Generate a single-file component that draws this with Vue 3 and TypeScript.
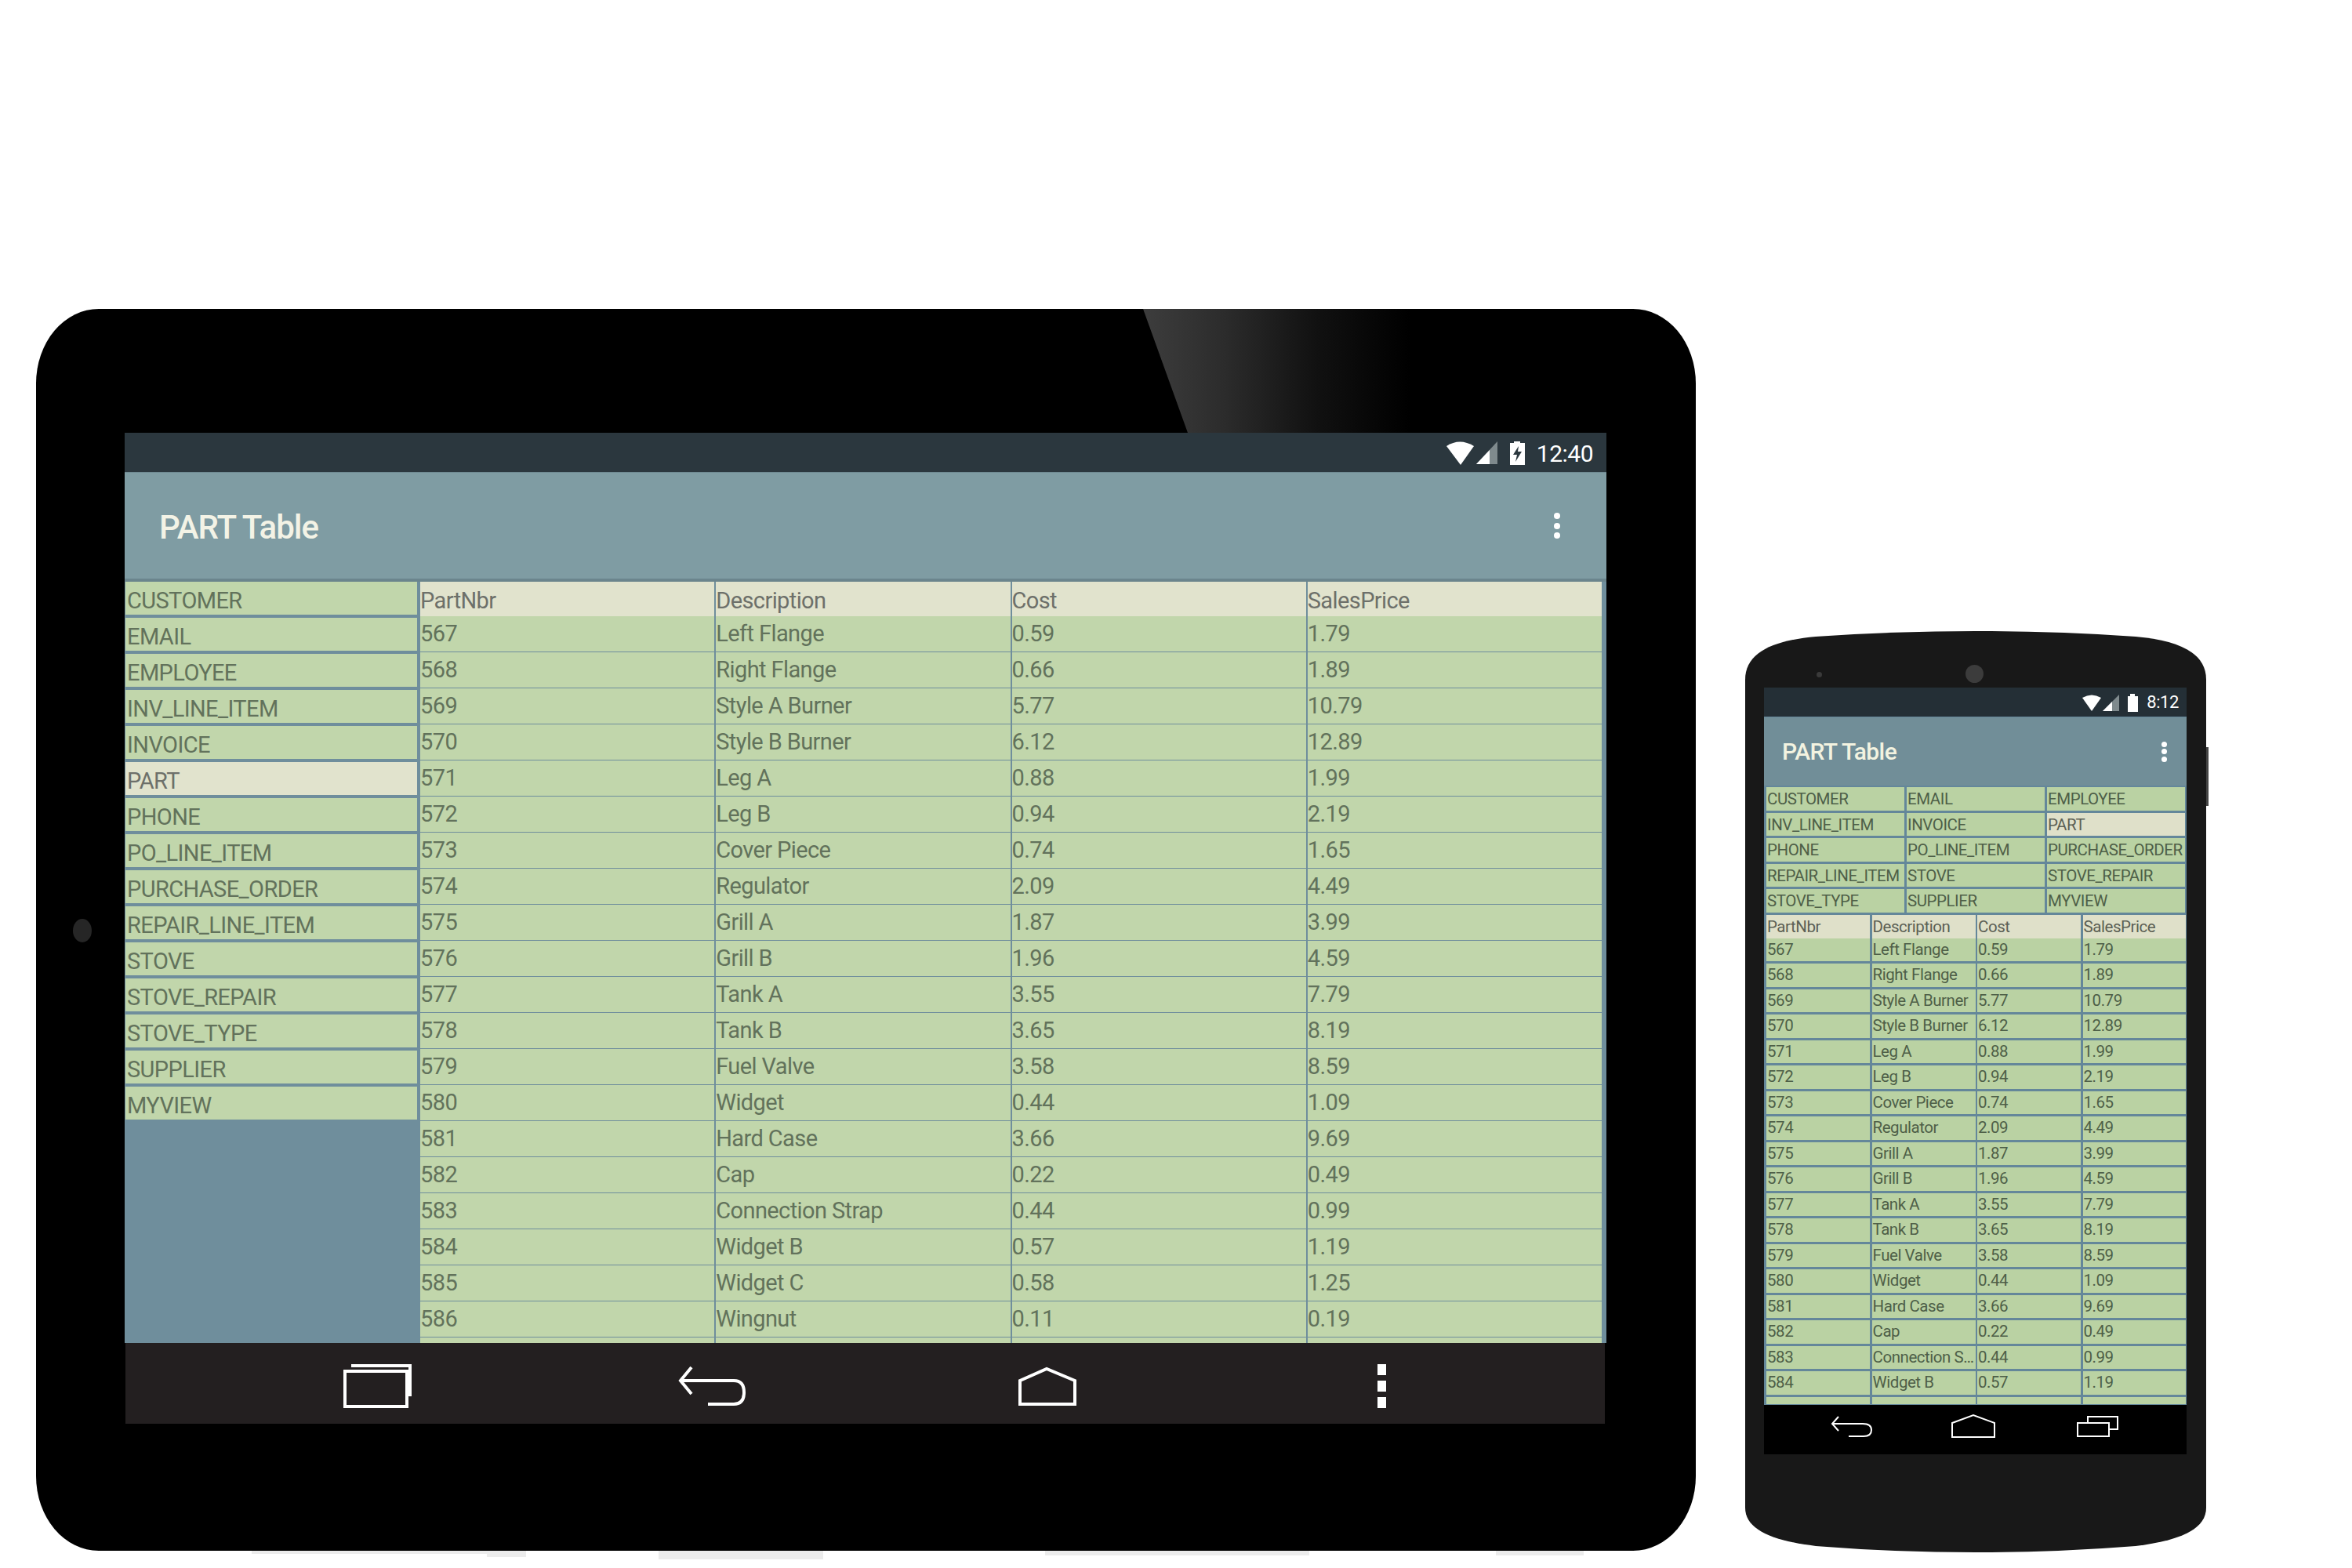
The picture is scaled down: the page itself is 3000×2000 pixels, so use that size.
<script setup lang="ts">
interface Part {
  nbr: number
  desc: string
  cost: string
  price: string
}

const tables: string[] = [
  'CUSTOMER', 'EMAIL', 'EMPLOYEE', 'INV_LINE_ITEM', 'INVOICE', 'PART', 'PHONE', 'PO_LINE_ITEM',
  'PURCHASE_ORDER', 'REPAIR_LINE_ITEM', 'STOVE', 'STOVE_REPAIR', 'STOVE_TYPE', 'SUPPLIER', 'MYVIEW',
]
const columns: string[] = ['PartNbr', 'Description', 'Cost', 'SalesPrice']

const parts: Part[] = [
  { nbr: 567, desc: 'Left Flange', cost: '0.59', price: '1.79' },
  { nbr: 568, desc: 'Right Flange', cost: '0.66', price: '1.89' },
  { nbr: 569, desc: 'Style A Burner', cost: '5.77', price: '10.79' },
  { nbr: 570, desc: 'Style B Burner', cost: '6.12', price: '12.89' },
  { nbr: 571, desc: 'Leg A', cost: '0.88', price: '1.99' },
  { nbr: 572, desc: 'Leg B', cost: '0.94', price: '2.19' },
  { nbr: 573, desc: 'Cover Piece', cost: '0.74', price: '1.65' },
  { nbr: 574, desc: 'Regulator', cost: '2.09', price: '4.49' },
  { nbr: 575, desc: 'Grill A', cost: '1.87', price: '3.99' },
  { nbr: 576, desc: 'Grill B', cost: '1.96', price: '4.59' },
  { nbr: 577, desc: 'Tank A', cost: '3.55', price: '7.79' },
  { nbr: 578, desc: 'Tank B', cost: '3.65', price: '8.19' },
  { nbr: 579, desc: 'Fuel Valve', cost: '3.58', price: '8.59' },
  { nbr: 580, desc: 'Widget', cost: '0.44', price: '1.09' },
  { nbr: 581, desc: 'Hard Case', cost: '3.66', price: '9.69' },
  { nbr: 582, desc: 'Cap', cost: '0.22', price: '0.49' },
  { nbr: 583, desc: 'Connection Strap', cost: '0.44', price: '0.99' },
  { nbr: 584, desc: 'Widget B', cost: '0.57', price: '1.19' },
  { nbr: 585, desc: 'Widget C', cost: '0.58', price: '1.25' },
  { nbr: 586, desc: 'Wingnut', cost: '0.11', price: '0.19' },
]
// phone screen only fits up to 584, the next row is cut off before its text
const phoneParts = parts.slice(0, 18)
const selected = 'PART'

// grey smears under the tablet edge
const smears = [
  { left: 275, width: 330, height: 4 },
  { left: 575, width: 50, height: 8 },
  { left: 794, width: 210, height: 11 },
  { left: 1287, width: 337, height: 6 },
  { left: 1862, width: 112, height: 6 },
]
</script>

<template>
  <div class="stage">
    <!-- tablet -->
    <div class="tablet">
      <div class="glare"></div>
      <div class="tablet-cam"></div>
      <div v-for="s in smears" :key="s.left" class="smear" :style="{ left: s.left + 'px', width: s.width + 'px', height: s.height + 'px' }"></div>
      <div class="t-screen">
        <div class="t-status">
          <svg class="t-status-icons" width="100" height="32" viewBox="0 0 100 32">
            <path d="M0 7 Q17 -4 35 7 L18 31 Z" fill="#fff" />
            <path d="M38 30 L65 1 V30 Z" fill="#7f8a8d" />
            <path d="M38 30 L55 12 V30 Z" fill="#fff" />
            <path d="M81 3 H86 V1 H94 V3 H100 V31 H81 Z" fill="#fff" />
            <path d="M92 7 L85 18 H90 L88 27 L96 14 H91 Z" fill="#2b373e" />
          </svg>
          <span class="t-clock">12:40</span>
        </div>
        <div class="t-appbar">
          <span class="t-title">PART Table</span>
          <div class="t-dots"><i></i><i></i><i></i></div>
        </div>
        <div class="t-content">
          <div class="t-list">
            <div v-for="t in tables" :key="t" class="t-list-item" :class="{ sel: t === selected }">{{ t }}</div>
          </div>
          <div class="t-table">
            <div class="t-row t-head">
              <div v-for="c in columns" :key="c" class="t-cell">{{ c }}</div>
            </div>
            <div v-for="p in parts" :key="p.nbr" class="t-row">
              <div class="t-cell">{{ p.nbr }}</div>
              <div class="t-cell">{{ p.desc }}</div>
              <div class="t-cell">{{ p.cost }}</div>
              <div class="t-cell">{{ p.price }}</div>
            </div>
            <div class="t-row">
              <div v-for="c in columns" :key="c" class="t-cell"></div>
            </div>
          </div>
        </div>
        <div class="t-nav">
          <svg class="t-nav-icons" width="1340" height="66" viewBox="0 0 1340 66" fill="none" stroke="#fff" stroke-width="4">
            <rect x="2" y="13" width="79" height="45" />
            <path d="M10 6 H85 V45" />
            <path d="M444 8 L430 25 L444 42 M430 25 H498 Q511 25 511 40 Q511 55 498 55 H465" />
            <path d="M863 55 V25 L897 10 L933 25 V55 Z" />
            <g fill="#fff" stroke="none">
              <rect x="1319" y="4" width="11" height="14" />
              <rect x="1319" y="25" width="11" height="14" />
              <rect x="1319" y="46" width="11" height="14" />
            </g>
          </svg>
        </div>
      </div>
    </div>

    <!-- phone -->
    <div class="phone">
      <svg class="phone-body" width="592" height="1175" viewBox="0 0 592 1175">
        <rect x="585" y="148" width="6" height="75" fill="#444" />
        <path d="M0 62 C0 28 34 12 90 7 Q190 0 294 0 Q398 0 498 7 C554 12 588 28 588 62 V1118 C588 1146 554 1160 498 1167 Q398 1175 294 1175 Q190 1175 90 1167 C34 1160 0 1146 0 1118 Z" fill="#181818" />
      </svg>
      <div class="phone-speaker"></div>
      <div class="phone-cam"></div>
      <div class="p-screen">
        <div class="p-status">
          <svg width="72" height="24" viewBox="0 0 72 24">
            <path d="M0 5 Q12 -2 24 5 L12 22 Z" fill="#fff" />
            <path d="M26 22 L47 1 V22 Z" fill="#7f8a8d" />
            <path d="M26 22 L38 10 V22 Z" fill="#fff" />
            <path d="M58 3 H61 V0 H67 V3 H71 V23 H58 Z" fill="#fff" />
          </svg>
          <span class="p-clock">8:12</span>
        </div>
        <div class="p-appbar">
          <span class="p-title">PART Table</span>
          <div class="p-dots"><i></i><i></i><i></i></div>
        </div>
        <div class="p-content">
          <div class="p-tabs">
            <div v-for="t in tables" :key="t" class="p-tab" :class="{ sel: t === selected }">{{ t }}</div>
          </div>
          <div class="p-row p-head">
            <div v-for="c in columns" :key="c" class="p-cell">{{ c }}</div>
          </div>
          <div v-for="p in phoneParts" :key="p.nbr" class="p-row">
            <div class="p-cell">{{ p.nbr }}</div>
            <div class="p-cell">{{ p.desc }}</div>
            <div class="p-cell">{{ p.cost }}</div>
            <div class="p-cell">{{ p.price }}</div>
          </div>
          <div class="p-row p-stub">
            <div v-for="c in columns" :key="c" class="p-cell"></div>
          </div>
        </div>
        <div class="p-nav">
          <svg width="539" height="63" viewBox="0 0 539 63" fill="none" stroke="#fff" stroke-width="2">
            <path d="M95 15 L87 24 L95 33 M87 24 H126 Q137 24 137 32 Q137 40 127 40 H108" />
            <path d="M240 41 V23 L267 13 L294 23 V41 Z" />
            <rect x="400" y="23" width="40" height="17" />
            <path d="M413 23 V15 H451 V31 H440" />
          </svg>
        </div>
      </div>
    </div>
  </div>
</template>

<style>
html,
body {
  background: #fff;
}
</style>

<style scoped>
.stage {
  width: 3000px;
  height: 2000px;
  display: flex;
  align-items: flex-start;
  padding-left: 46px;
  box-sizing: border-box;
  overflow: hidden;
  font-family: Roboto, "Liberation Sans", sans-serif;
}

/* tablet */
.tablet {
  position: relative;
  width: 2117px;
  height: 1584px;
  margin-top: 394px;
  padding: 158px 0 0 113px;
  box-sizing: border-box;
  background: #000;
  border-radius: 80px / 95px;
}
.glare {
  position: absolute;
  left: 1412px;
  top: 0;
  width: 340px;
  height: 158px;
  background: linear-gradient(90deg, #3d3d3d 0%, #2c2c2c 30%, #111 65%, #000 100%);
  clip-path: polygon(0 0, 100% 0, 100% 100%, 57px 100%);
}
.tablet-cam {
  position: absolute;
  left: 47px;
  top: 778px;
  width: 24px;
  height: 30px;
  border-radius: 50%;
  background: #262626;
}
.smear {
  position: absolute;
  top: 100%;
  background: #ececec;
}
.t-screen {
  width: 1890px;
}
.t-status {
  height: 50px;
  background: #2b373e;
  border-bottom: 1px solid #6f8a92;
  display: flex;
  align-items: center;
  justify-content: flex-end;
  padding-right: 17px;
  gap: 15px;
  color: #fff;
}
.t-status-icons {
  display: block;
  margin-top: 1px;
}
.t-clock {
  font-size: 30px;
  letter-spacing: -0.5px;
  margin-top: 3px;
}
.t-appbar {
  background: #7f9ca3;
  border-bottom: 4px solid #6b858d;
  display: flex;
  align-items: center;
  justify-content: space-between;
  padding: 3px 59px 0 44px;
  height: 132px;
}
.t-title {
  font-size: 42px;
  font-weight: 500;
  color: #f3f3e6;
  letter-spacing: -1px;
}
.t-dots,
.p-dots {
  display: flex;
  flex-direction: column;
}
.t-dots {
  gap: 4.5px;
  margin-top: -3px;
}
.t-dots i {
  width: 8px;
  height: 8px;
  border-radius: 50%;
  background: #fff;
}
.t-content {
  height: 971px;
  display: flex;
  background: #6f8e9c;
  overflow: hidden;
  font-size: 29px;
  letter-spacing: -0.6px;
}
.t-list {
  width: 373px;
  flex-shrink: 0;
}
.t-list-item {
  height: 42px;
  margin-bottom: 4px;
  margin-left: 1px;
  padding-left: 2px;
  line-height: 48px;
  background: #c1d6ab;
  color: #62725b;
}
.t-list-item.sel {
  background: #e1e3cd;
  color: #6d706a;
}
.t-table {
  width: 1507px;
  margin-left: 4px;
}
.t-row {
  display: grid;
  grid-template-columns: repeat(4, 1fr);
  column-gap: 2px;
  height: 42px;
  margin-bottom: 4px;
}
.t-head {
  height: 44px;
  margin-bottom: 0;
}
.t-cell {
  line-height: 45px;
  background: #c1d6ab;
  color: #62725b;
  white-space: nowrap;
}
.t-head .t-cell {
  line-height: 48px;
  background: #e1e3cd;
  color: #6d706a;
}
.t-nav {
  height: 103px;
  margin-left: 1px;
  width: 1887px;
  background: #231f20;
  padding: 23px 0 0 278px;
  box-sizing: border-box;
}
.t-nav-icons {
  display: block;
}

/* phone */
.phone {
  position: relative;
  width: 588px;
  height: 1175px;
  margin: 805px 0 0 63px;
  padding: 72px 0 0 24px;
  box-sizing: border-box;
}
.phone-body {
  position: absolute;
  left: 0;
  top: 0;
}
.phone-speaker {
  position: absolute;
  left: 91px;
  top: 52px;
  width: 7px;
  height: 7px;
  border-radius: 50%;
  background: #3a3a3a;
}
.phone-cam {
  position: absolute;
  left: 281px;
  top: 43px;
  width: 23px;
  height: 23px;
  border-radius: 50%;
  background: #3c3c3c;
}
.p-screen {
  position: relative;
  width: 539px;
}
.p-status {
  height: 37px;
  background: #242f36;
  display: flex;
  align-items: center;
  justify-content: flex-end;
  gap: 10px;
  padding-right: 10px;
  color: #fff;
}
.p-status svg {
  display: block;
  margin-top: 2px;
}
.p-clock {
  font-size: 22px;
  letter-spacing: -0.4px;
}
.p-appbar {
  height: 88px;
  background: #718e98;
  border-top: 1px solid #64879a;
  box-sizing: border-box;
  display: flex;
  align-items: center;
  justify-content: space-between;
  padding: 0 25px 0 23px;
}
.p-title {
  font-size: 30px;
  font-weight: 500;
  color: #f3f3e0;
  letter-spacing: -0.6px;
}
.p-dots {
  gap: 2.5px;
}
.p-dots i {
  width: 7px;
  height: 7px;
  border-radius: 50%;
  background: #fff;
}
.p-content {
  height: 790px;
  overflow: hidden;
  padding: 2px 1px 0 3px;
  box-sizing: border-box;
  background: #64879a;
  font-size: 20.5px;
  letter-spacing: -0.45px;
}
.p-tabs {
  display: grid;
  grid-template-columns: repeat(3, 176px);
  column-gap: 3px;
  grid-auto-rows: 29.5px;
  row-gap: 3px;
  margin-bottom: 3.5px;
}
.p-tab {
  padding-left: 1px;
  line-height: 30px;
  background: #bad2a3;
  color: #4e5f48;
  white-space: nowrap;
}
.p-tab.sel {
  background: #dfe0c9;
  color: #5c6055;
}
.p-row {
  display: grid;
  grid-template-columns: 132px 132px 132px 1fr;
  column-gap: 2.5px;
  height: 29.5px;
  margin-bottom: 3px;
}
.p-head {
  margin-bottom: 0;
}
.p-stub {
  height: 9px;
  margin-bottom: 0;
}
.p-cell {
  padding-left: 1px;
  line-height: 28px;
  background: #bad2a3;
  color: #4e5f48;
  white-space: nowrap;
  overflow: hidden;
  text-overflow: ellipsis;
}
.p-head .p-cell {
  line-height: 30px;
  background: #dfe0c9;
  color: #5c6055;
}
.p-nav {
  height: 63px;
  background: #000;
}
.p-nav svg {
  display: block;
}
</style>
